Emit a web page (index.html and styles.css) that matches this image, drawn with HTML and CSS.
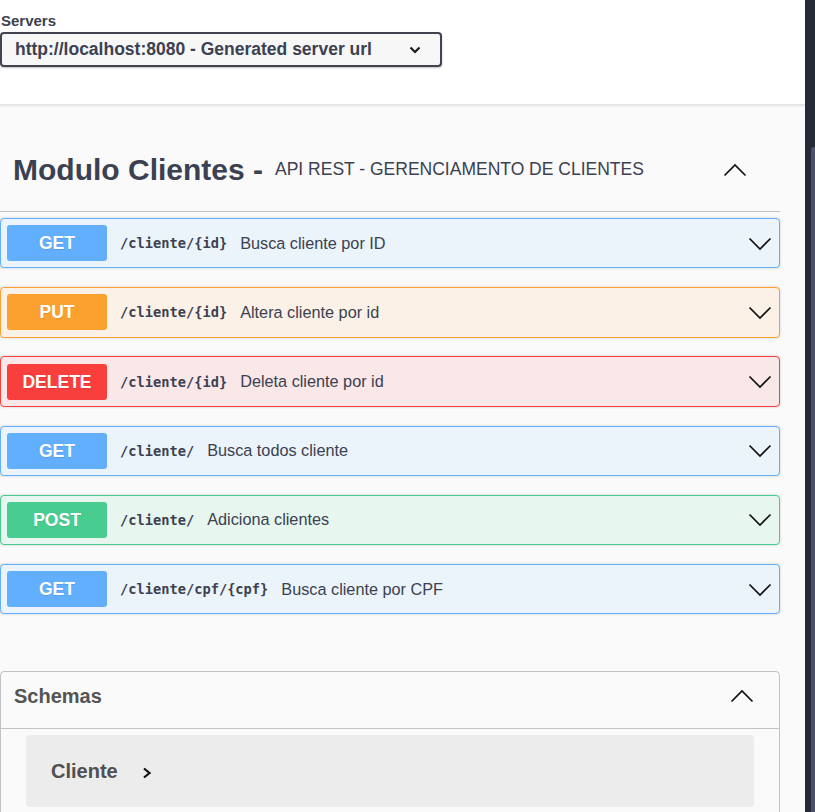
FILE: index.html
```html
<!DOCTYPE html>
<html lang="pt">
<head>
<meta charset="utf-8">
<title>Swagger UI</title>
<link rel="stylesheet" href="styles.css">
</head>
<body>
<div class="layout">
  <div class="page">
    <div class="scheme">
      <div class="servers-label">Servers</div>
      <div class="select">
        <span>http://localhost:8080 - Generated server url</span>
        <svg class="select-arrow" width="12" height="8" viewBox="0 0 12 8"><polyline points="1.5,1.5 6,6 10.5,1.5" fill="none" stroke="#1b1b1b" stroke-width="2.2" stroke-linejoin="miter"/></svg>
      </div>
    </div>
    <div class="content">
      <div class="tag">
        <h3 class="tag-title">Modulo Clientes -</h3>
        <small class="tag-desc">API REST - GERENCIAMENTO DE CLIENTES</small>
        <svg class="chev" width="24" height="14" viewBox="0 0 24 14"><polyline points="1.5,12.5 12,2 22.5,12.5" fill="none" stroke="#111" stroke-width="1.7"/></svg>
      </div>
      <div class="ops">
        <div class="op get">
          <span class="method">GET</span>
          <span class="path">/cliente/{id}</span>
          <span class="desc">Busca cliente por ID</span>
          <svg class="chev op-chev" width="24" height="14" viewBox="0 0 24 14"><polyline points="1.5,1.5 12,12 22.5,1.5" fill="none" stroke="#111" stroke-width="1.7"/></svg>
        </div>
        <div class="op put">
          <span class="method">PUT</span>
          <span class="path">/cliente/{id}</span>
          <span class="desc">Altera cliente por id</span>
          <svg class="chev op-chev" width="24" height="14" viewBox="0 0 24 14"><polyline points="1.5,1.5 12,12 22.5,1.5" fill="none" stroke="#111" stroke-width="1.7"/></svg>
        </div>
        <div class="op delete">
          <span class="method">DELETE</span>
          <span class="path">/cliente/{id}</span>
          <span class="desc">Deleta cliente por id</span>
          <svg class="chev op-chev" width="24" height="14" viewBox="0 0 24 14"><polyline points="1.5,1.5 12,12 22.5,1.5" fill="none" stroke="#111" stroke-width="1.7"/></svg>
        </div>
        <div class="op get">
          <span class="method">GET</span>
          <span class="path">/cliente/</span>
          <span class="desc">Busca todos cliente</span>
          <svg class="chev op-chev" width="24" height="14" viewBox="0 0 24 14"><polyline points="1.5,1.5 12,12 22.5,1.5" fill="none" stroke="#111" stroke-width="1.7"/></svg>
        </div>
        <div class="op post">
          <span class="method">POST</span>
          <span class="path">/cliente/</span>
          <span class="desc">Adiciona clientes</span>
          <svg class="chev op-chev" width="24" height="14" viewBox="0 0 24 14"><polyline points="1.5,1.5 12,12 22.5,1.5" fill="none" stroke="#111" stroke-width="1.7"/></svg>
        </div>
        <div class="op get">
          <span class="method">GET</span>
          <span class="path">/cliente/cpf/{cpf}</span>
          <span class="desc">Busca cliente por CPF</span>
          <svg class="chev op-chev" width="24" height="14" viewBox="0 0 24 14"><polyline points="1.5,1.5 12,12 22.5,1.5" fill="none" stroke="#111" stroke-width="1.7"/></svg>
        </div>
      </div>
      <section class="models">
        <div class="models-head">
          <h4 class="models-title">Schemas</h4>
          <svg class="chev" width="24" height="14" viewBox="0 0 24 14"><polyline points="1.5,12.5 12,2 22.5,12.5" fill="none" stroke="#111" stroke-width="1.7"/></svg>
        </div>
        <div class="model-box">
          <span class="model-title">Cliente</span>
          <svg class="model-arrow" width="10" height="12" viewBox="0 0 10 12"><polyline points="2,1.5 7.5,6 2,10.5" fill="none" stroke="#111" stroke-width="2.2"/></svg>
        </div>
      </section>
    </div>
  </div>
  <div class="scrollbar"><div class="thumb"></div></div>
</div>
</body>
</html>
```
FILE: styles.css
```css
html, body {
  margin: 0;
  padding: 0;
  height: 812px;
  overflow: hidden;
}
body {
  font-family: "Liberation Sans", Arial, sans-serif;
  color: #3b4151;
  background: #fafafa;
}
.layout {
  display: flex;
  height: 812px;
}
.page {
  flex: 1;
  min-width: 0;
  background: #fafafa;
  overflow: hidden;
}
.scrollbar {
  width: 10px;
  background: #262a37;
  display: flex;
  flex-direction: column;
}
.thumb {
  margin-top: 147px;
  margin-left: 6px;
  flex: 1;
  background: #4b4f67;
  border-radius: 2px 0 0 0;
}
.scheme {
  box-sizing: border-box;
  height: 105px;
  background: #fff;
  padding-top: 12px;
  border-bottom: 1px solid #e3e3e3;
  box-shadow: 0 1px 2px rgba(0, 0, 0, 0.1);
  position: relative;
}
.servers-label {
  font-weight: bold;
  font-size: 15px;
  line-height: 17px;
  margin-left: 1px;
  margin-bottom: 3px;
}
.select {
  box-sizing: border-box;
  width: 442px;
  height: 35px;
  border: 2px solid #41444e;
  border-radius: 4px;
  background: #f7f7f7;
  box-shadow: 0 1px 2px rgba(0, 0, 0, 0.25);
  display: flex;
  align-items: center;
  justify-content: space-between;
  padding: 0 19px 0 13px;
  font-weight: bold;
  font-size: 17.5px;
}
.select-arrow {
  display: block;
}
.content {
  padding: 25px 25px 0 0;
}
.tag {
  box-sizing: border-box;
  height: 82px;
  display: flex;
  align-items: center;
  padding: 0 33px 2px 13px;
  border-bottom: 1px solid rgba(59, 65, 81, 0.3);
  margin-bottom: 6px;
}
.tag-title {
  margin: 0;
  font-size: 30px;
  font-weight: bold;
  white-space: nowrap;
}
.tag-desc {
  flex: 1;
  font-size: 17.5px;
  padding: 0 12px;
}
.chev {
  display: block;
  flex: none;
}
.ops {
  padding-bottom: 0.1px;
}
.op {
  box-sizing: border-box;
  height: 50.4px;
  margin-bottom: 18.8px;
  display: flex;
  align-items: center;
  padding: 0 7px 0 6px;
  border: 1px solid;
  border-radius: 4px;
  box-shadow: 0 0 3px rgba(0, 0, 0, 0.19);
}
.op.get { background: #ebf3fb; border-color: #61affe; }
.op.put { background: #fbf1e6; border-color: #fca130; }
.op.delete { background: #fae7e7; border-color: #f93e3e; }
.op.post { background: #e8f6f0; border-color: #49cc90; }
.method {
  width: 100px;
  height: 36px;
  line-height: 36px;
  text-align: center;
  border-radius: 3px;
  color: #fff;
  font-weight: bold;
  font-size: 17.5px;
  text-shadow: 0 1px 0 rgba(0, 0, 0, 0.1);
  flex: none;
}
.get .method { background: #61affe; }
.put .method { background: #fca130; }
.delete .method { background: #f93e3e; }
.post .method { background: #49cc90; }
.path {
  margin-left: 13px;
  font-family: "DejaVu Sans Mono", "Liberation Mono", monospace;
  font-weight: bold;
  font-size: 13.7px;
  color: #3b4151;
}
.desc {
  margin-left: 13px;
  font-size: 16.25px;
  flex: 1;
}
.op-chev {
  margin-top: 1px;
}
.models {
  margin-top: 38px;
  border: 1px solid rgba(59, 65, 81, 0.3);
  border-radius: 4px;
  padding-bottom: 20px;
}
.models-head {
  box-sizing: border-box;
  height: 57px;
  display: flex;
  align-items: center;
  justify-content: space-between;
  padding: 0 25px 8px 13px;
  border-bottom: 1px solid rgba(59, 65, 81, 0.3);
}
.models-title {
  margin: 0;
  font-size: 20px;
  font-weight: bold;
  color: #545454;
}
.model-box {
  margin: 6px 25px 0 25px;
  height: 72px;
  background: #ececec;
  border-radius: 4px;
  display: flex;
  align-items: center;
  padding-left: 25px;
}
.model-title {
  font-size: 20px;
  font-weight: bold;
  color: #505050;
}
.model-arrow {
  display: block;
  margin-left: 24px;
  margin-top: 3px;
}
```
